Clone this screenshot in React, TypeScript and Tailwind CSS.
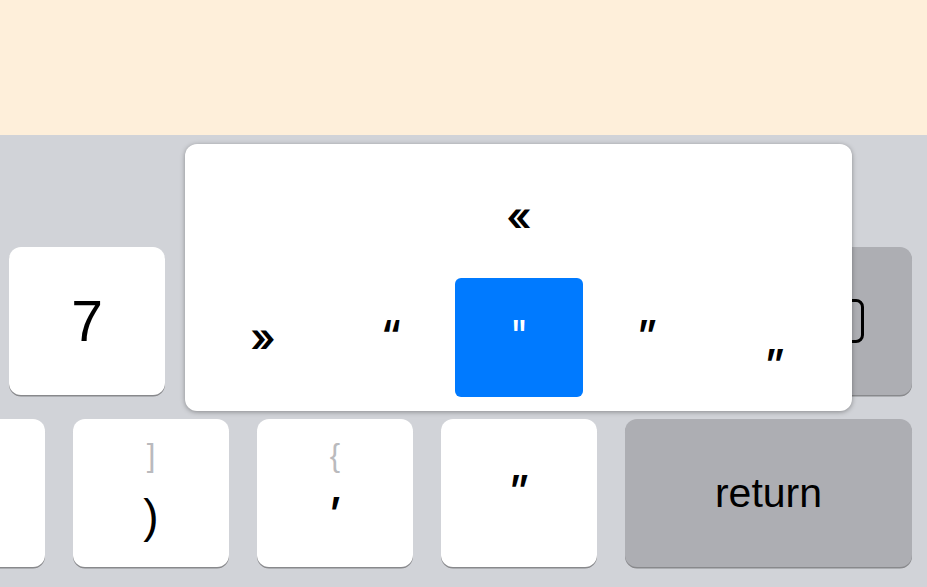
import type { ReactNode } from 'react'

const sans = { fontFamily: '"Liberation Sans", Arial, sans-serif' }
const quote = { fontFamily: 'Inter, sans-serif' }

function Key({ children, className = '', bg = 'bg-white' }: { children?: ReactNode, className?: string, bg?: string }) {
  return (
    <div
      className={`h-[148px] shrink-0 rounded-[12px] shadow-[0_1.5px_0_#88898c] flex flex-col items-center justify-center text-black ${bg} ${className}`}
    >
      {children}
    </div>
  )
}

export default function App() {
  return (
    <div className="w-[927px] h-[587px] flex flex-col bg-[#d1d3d8] overflow-hidden">
      <div className="h-[135px] shrink-0 bg-[#feefda]" />

      <div className="relative flex-1 pt-[112px]">
        {/* Row 1 (keys under the popup are left blank) */}
        <div className="flex gap-[28px] pl-[9px]">
          <Key className="w-[156px]"><span className="text-[57px] leading-none" style={sans}>7</span></Key>
          <Key className="w-[156px]" />
          <Key className="w-[156px]" />
          <Key className="w-[156px]" />
          <Key className="w-[167px]" bg="bg-[#adaeb3]">
            <svg width="72" height="46" viewBox="0 0 72 46" fill="none" stroke="#000" strokeWidth="3" strokeLinejoin="round" strokeLinecap="round">
              <path d="M24 2.5H63a6.5 6.5 0 0 1 6.5 6.5v28a6.5 6.5 0 0 1-6.5 6.5H24L3 23Z" />
              <path d="M34 13l20 20M54 13L34 33" />
            </svg>
          </Key>
        </div>

        {/* Row 2 */}
        <div className="mt-[24px] flex gap-[28px]">
          <Key className="w-[156px] -ml-[111px]" />
          <Key className="w-[156px] justify-start">
            <span className="mt-[20px] text-[31px] leading-[34px] text-[#bababd]" style={sans}>]</span>
            <span className="mt-[17px] text-[46px] leading-[52px]" style={sans}>)</span>
          </Key>
          <Key className="w-[156px] justify-start">
            <span className="mt-[20px] text-[31px] leading-[34px] text-[#bababd]" style={sans}>{'{'}</span>
            <span className="mt-[19px] text-[42px] leading-none font-semibold" style={quote}>’</span>
          </Key>
          <Key className="w-[156px] justify-start">
            <span className="mt-[51px] text-[40px] leading-none font-semibold" style={quote}>”</span>
          </Key>
          <Key className="w-[287px]" bg="bg-[#adaeb3]">
            <span className="text-[41px] leading-none" style={sans}>return</span>
          </Key>
        </div>

        {/* Accent popup */}
        <div
          className="absolute left-[185px] top-[9px] w-[667px] h-[267px] rounded-[12px] bg-white shadow-[0_1px_5px_rgba(0,0,0,0.35)] flex flex-col pl-[14px] pr-[13px] pb-[14px] text-black"
          style={quote}
        >
          <div className="flex-1 flex justify-center pt-[53px]">
            <span className="text-[40px] leading-none font-semibold">«</span>
          </div>
          <div className="grid grid-cols-5 h-[119px]">
            <div className="flex justify-center pt-[40px]">
              <span className="text-[40px] leading-none font-semibold">»</span>
            </div>
            <div className="flex justify-center pt-[37px]">
              <span className="text-[40px] leading-none font-semibold">“</span>
            </div>
            <div className="flex justify-center rounded-[6px] bg-[#007aff] pt-[37px]">
              <span className="text-[40px] leading-none text-white">"</span>
            </div>
            <div className="flex justify-center pt-[37px]">
              <span className="text-[40px] leading-none font-semibold">”</span>
            </div>
            <div className="flex justify-center pt-[41px]">
              <span className="text-[40px] leading-none font-semibold">„</span>
            </div>
          </div>
        </div>
      </div>
    </div>
  )
}
